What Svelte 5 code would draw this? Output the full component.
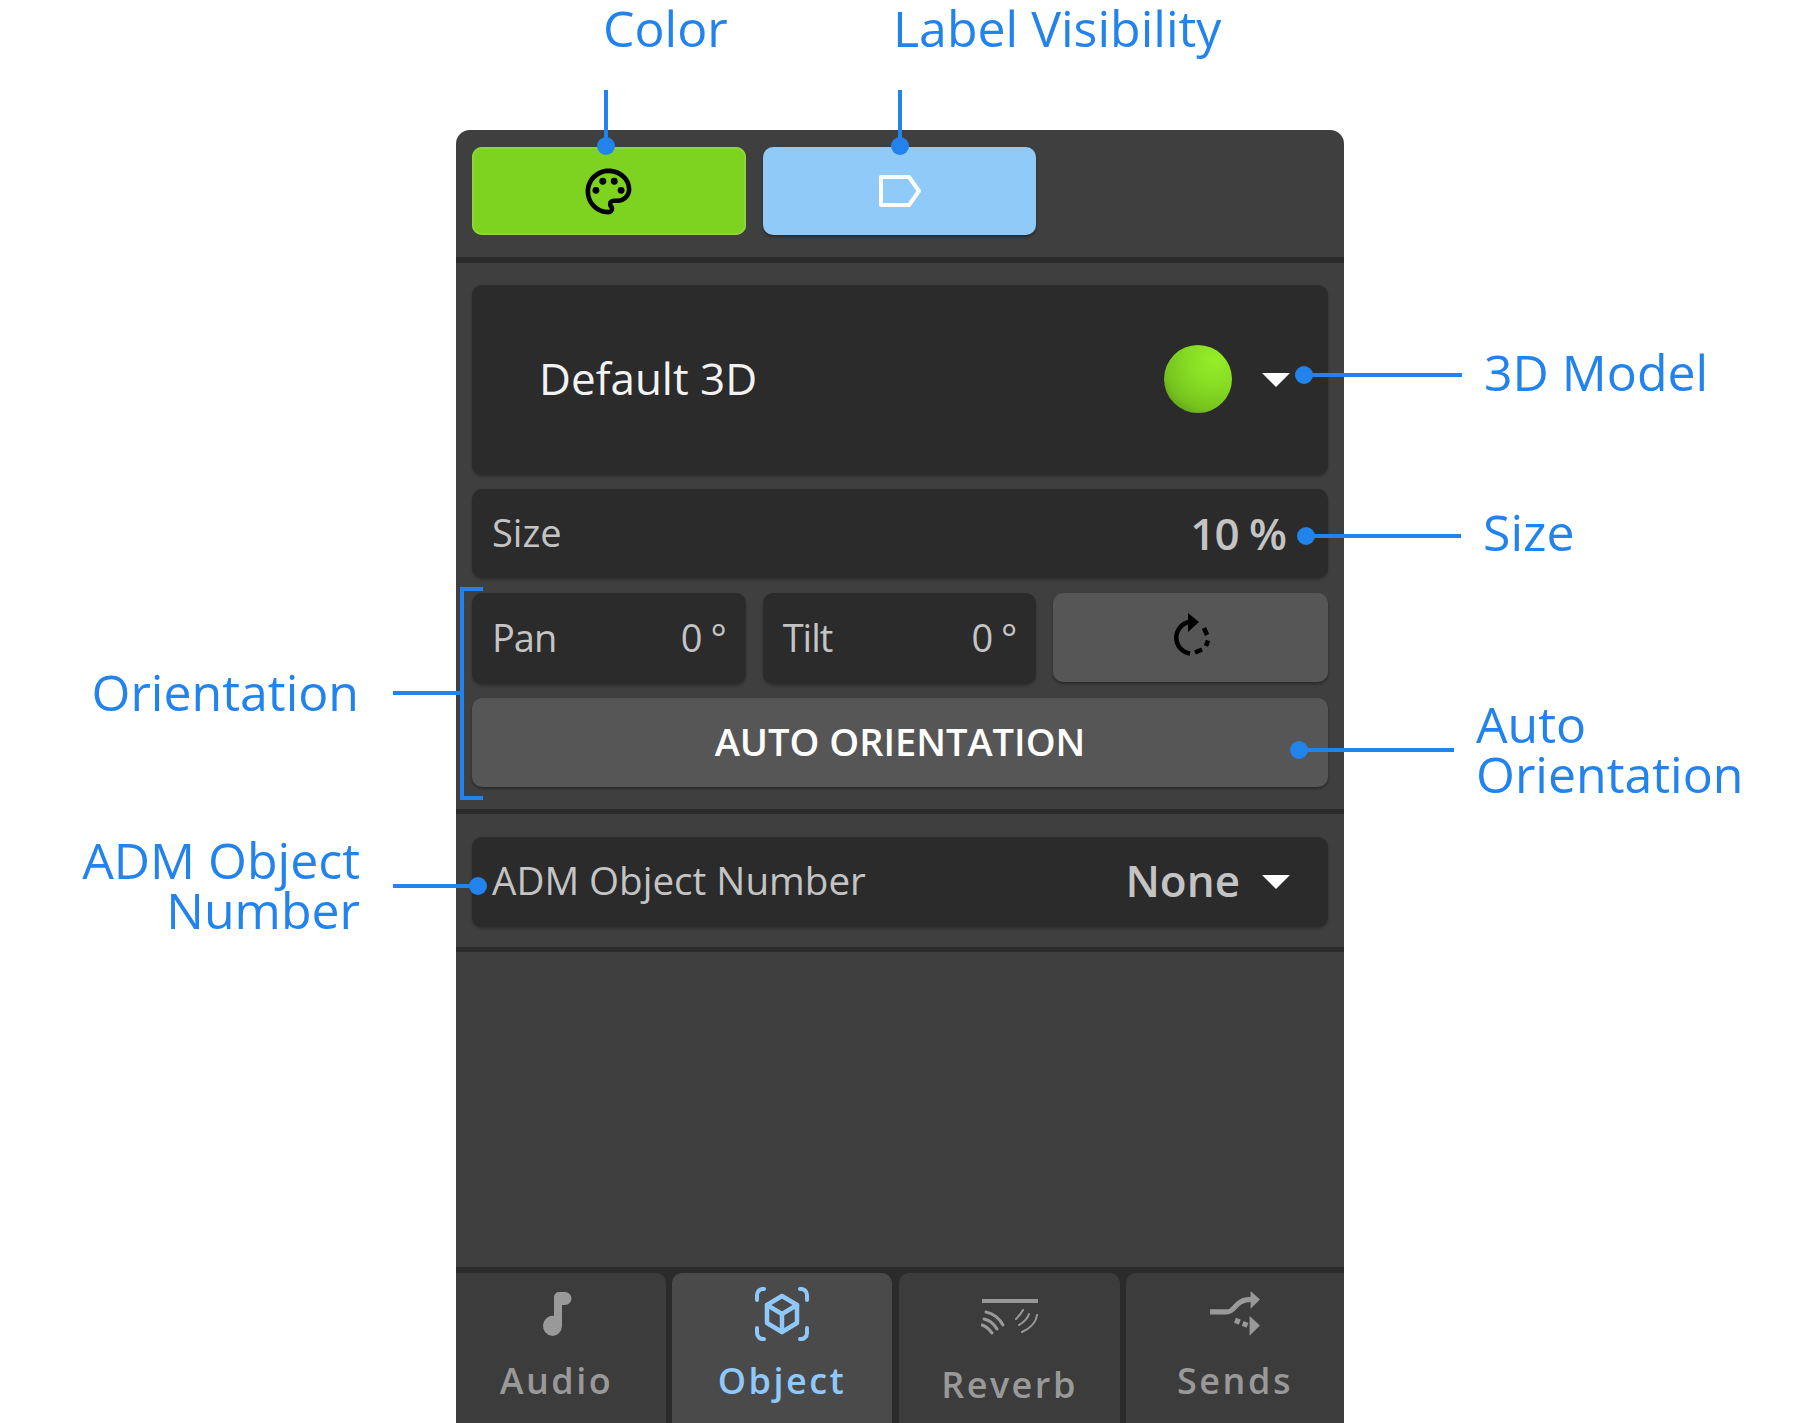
<script>
  const tabs = [
    { id: 'audio', label: 'Audio' },
    { id: 'object', label: 'Object' },
    { id: 'reverb', label: 'Reverb' },
    { id: 'sends', label: 'Sends' }
  ];
</script>

<div class="page">
  <div class="panel">
    <section class="top">
      <button class="btn green" aria-label="Color">
        <svg width="55" height="55" viewBox="0 0 24 24" fill="#000">
          <path d="M12 22C6.49 22 2 17.51 2 12S6.49 2 12 2s10 4.04 10 9c0 3.31-2.69 6-6 6h-1.77c-.28 0-.5.22-.5.5 0 .12.05.23.13.33.41.47.64 1.06.64 1.67A2.5 2.5 0 0 1 12 22zm0-18c-4.41 0-8 3.59-8 8s3.59 8 8 8c.28 0 .5-.22.5-.5a.54.54 0 0 0-.14-.35c-.41-.46-.63-1.05-.63-1.65a2.5 2.5 0 0 1 2.5-2.5H16c2.21 0 4-1.79 4-4 0-3.86-3.59-7-8-7z"/>
          <circle cx="6.5" cy="11.5" r="1.5"/><circle cx="9.5" cy="7.5" r="1.5"/><circle cx="14.5" cy="7.5" r="1.5"/><circle cx="17.5" cy="11.5" r="1.5"/>
        </svg>
      </button>
      <button class="btn blue" aria-label="Label Visibility">
        <svg width="44" height="34" viewBox="0 0 44 34" fill="none" stroke="#fff" stroke-width="4" stroke-linejoin="round">
          <path d="M3 3H31L41 17L31 31H3Z"/>
        </svg>
      </button>
    </section>

    <section class="middle">
      <div class="field model">
        <span class="model-name">Default 3D</span>
        <span class="ball"></span>
        <span class="caret white"></span>
      </div>
      <div class="field size">
        <span class="name">Size</span>
        <span class="value">10 %</span>
      </div>
      <div class="three">
        <div class="field small"><span class="name">Pan</span><span class="value">0 °</span></div>
        <div class="field small"><span class="name">Tilt</span><span class="value">0 °</span></div>
        <button class="btn grey" aria-label="Reset">
          <svg class="reset" width="40" height="44" viewBox="0 0 40 44" fill="none" stroke="#000" stroke-width="4.5">
            <path d="M18 9A16 16 0 0 0 19 40.5"/>
            <path d="M24 39.5L31 36.5M35 33L37 27.5M36 22L33 15"/>
            <path d="M17 0L28 9L17 19Z" fill="#000" stroke="none"/>
          </svg>
        </button>
      </div>
      <button class="btn grey auto"><span>AUTO ORIENTATION</span></button>
    </section>

    <section class="adm">
      <div class="field adm-field">
        <span class="name">ADM Object Number</span>
        <span class="none">None</span>
        <span class="caret"></span>
      </div>
    </section>

    <div class="spacer"></div>

    <nav class="tabs">
      {#each tabs as tab}
        <div class="tab {tab.id}">
          {#if tab.id === 'audio'}
            <svg width="32" height="46" viewBox="0 0 32 46" fill="#999">
              <path d="M13 6A5 5 0 0 1 18 1H24A6.5 6.5 0 0 1 24 14H21V35A9.5 10 0 1 1 13 25Z"/>
            </svg>
          {:else if tab.id === 'object'}
            <svg width="54" height="54" viewBox="0 0 54 54" fill="none" stroke="#8fc8fa" stroke-width="4" stroke-linecap="round" stroke-linejoin="round">
              <path d="M2 13V8A6 6 0 0 1 9 2"/><path d="M45 2A6 6 0 0 1 52 8V13"/>
              <path d="M2 41V46A6 6 0 0 0 9 52"/><path d="M45 52A6 6 0 0 0 52 46V41"/>
              <path d="M27 9L42 18V36L27 45L12 36V18Z" stroke-width="4.5"/>
              <path d="M12 18L27 27L42 18M27 27V45" stroke-width="4.5"/>
            </svg>
          {:else if tab.id === 'reverb'}
            <svg width="58" height="40" viewBox="0 0 58 40" fill="none" stroke="#999" stroke-linecap="round">
              <path d="M1 2H57" stroke-width="4" stroke-linecap="butt"/>
              <path d="M5 13C12 14 19 20 22 26" stroke-width="3"/>
              <path d="M3 20C8 21 13 25 16 30" stroke-width="3"/>
              <path d="M1 26C5 27 8 30 11 34" stroke-width="3"/>
              <path d="M42 11C40 15 38 17 35 20" stroke-width="2"/>
              <path d="M48 15C47 19 43 23 38 26" stroke-width="2"/>
              <path d="M56 16C55 24 48 30 41 33" stroke-width="2"/>
            </svg>
          {:else}
            <svg width="52" height="46" viewBox="0 0 50 44" fill="none" stroke="#999" stroke-width="5">
              <path d="M1 20H17C26 20 24 8 41 8"/>
              <path d="M25 28L37 33" stroke-dasharray="5 3"/>
              <path d="M40 0L49 8L40 17Z" fill="#999" stroke="none"/>
              <path d="M39 24L49 33L39 43Z" fill="#999" stroke="none"/>
            </svg>
          {/if}
          <span class="tab-label">{tab.label}</span>
        </div>
      {/each}
    </nav>
  </div>

  <!-- callouts laid over the panel -->
  <div class="callouts">
    <span class="note n-color">Color</span>
    <span class="note n-label">Label Visibility</span>
    <span class="note n-model">3D Model</span>
    <span class="note n-size">Size</span>
    <span class="note n-orient">Orientation</span>
    <span class="note n-auto">Auto<br />Orientation</span>
    <span class="note n-adm">ADM Object<br />Number</span>

    <i class="vline v-color"></i><i class="dot d-color"></i>
    <i class="vline v-label"></i><i class="dot d-label"></i>
    <i class="hline h-model"></i><i class="dot d-model"></i>
    <i class="hline h-size"></i><i class="dot d-size"></i>
    <i class="hline h-auto"></i><i class="dot d-auto"></i>
    <i class="hline h-orient"></i><i class="bracket"></i>
    <i class="hline h-adm"></i><i class="dot d-adm"></i>
  </div>
</div>

<style>
  :global(body) { margin: 0; background: #fff; }
  .page {
    position: relative;
    width: 1801px;
    height: 1423px;
    padding: 130px 0 0 456px;
    box-sizing: border-box;
    overflow: hidden;
    font-family: "Open Sans", sans-serif;
  }
  .panel {
    width: 888px;
    height: 1293px;
    background: #3f3f3f;
    border-radius: 14px 14px 0 0;
    display: flex;
    flex-direction: column;
  }
  .top {
    display: flex;
    gap: 17px;
    padding: 17px 16px 22px;
    border-bottom: 6px solid #2b2b2b;
  }
  .btn {
    border: 0;
    padding: 0;
    border-radius: 10px;
    display: flex;
    align-items: center;
    justify-content: center;
    box-shadow: 0 2px 3px rgba(0, 0, 0, .35);
  }
  .green { width: 274px; height: 88px; background: #7ed321; box-shadow: inset 0 0 0 2px #8cd63a; }
  .green svg { margin-right: 1px; }
  .blue { width: 273px; height: 88px; background: #90caf9; }
  .middle {
    display: flex;
    flex-direction: column;
    gap: 14px;
    padding: 22px 16px 22px;
    border-bottom: 5px solid #2b2b2b;
  }
  .field {
    background: #2b2b2b;
    border-radius: 10px;
    display: flex;
    align-items: center;
    box-sizing: border-box;
    box-shadow: 0 2px 3px rgba(0, 0, 0, .25);
    color: #c4c4c4;
  }
  .model { height: 190px; padding-left: 67px; }
  .model-name { font-size: 44px; color: #f2f2f2; flex: 1; margin-bottom: 4px; }
  .ball {
    width: 68px;
    height: 68px;
    border-radius: 50%;
    background: radial-gradient(circle at 74% 22%, #96ee28 0%, #86dc23 38%, #76c41f 68%, #4f8415 100%);
    margin: 0 30px 3px 0;
  }
  .caret {
    width: 0;
    height: 0;
    border-left: 14px solid transparent;
    border-right: 14px solid transparent;
    border-top: 14px solid #fff;
    margin-right: 38px;
  }
  .size { height: 89px; padding: 0 42px 0 20px; justify-content: space-between; }
  .name { font-size: 38px; margin-bottom: 4px; }
  .value { font-size: 44px; font-weight: 600; letter-spacing: -1px; margin-bottom: 2px; }
  .three { display: flex; gap: 17px; margin-top: 1px; }
  .small { width: 274px; height: 91px; padding: 0 20px; justify-content: space-between; }
  .small .name { letter-spacing: -1px; }
  .small .value { font-size: 38px; font-weight: 400; letter-spacing: -1px; margin-bottom: 4px; }
  .grey { background: #565656; }
  .three .grey { width: 275px; height: 89px; }
  .reset { margin: 0 0 5px 1px; }
  .auto {
    height: 89px;
    color: #fff;
    font: 600 38px "Open Sans", sans-serif;
  }
  .auto span { margin-bottom: 4px; }
  .adm { padding: 23px 16px 20px; border-bottom: 5px solid #2b2b2b; }
  .adm-field { height: 90px; padding-left: 20px; }
  .adm-field .name { flex: 1; font-size: 38.6px; }
  .none { font-size: 44px; font-weight: 600; margin: 0 22px 4px 0; }
  .spacer { flex: 1; border-bottom: 6px solid #2b2b2b; }
  .tabs { display: flex; gap: 6px; background: #2b2b2b; height: 150px; }
  .tab {
    flex: 1;
    min-width: 0;
    background: #3c3c3c;
    border-radius: 10px 10px 0 0;
    display: flex;
    flex-direction: column;
    align-items: center;
    padding-top: 14px;
    box-sizing: border-box;
  }
  .tab.audio { flex: 0 0 210px; padding-right: 9px; border-top-left-radius: 0; }
  .tab.object { flex: 0 0 220px; }
  .tab.reverb { flex: 0 0 221px; margin-left: 1px; }
  .tab.sends { border-top-right-radius: 0; }
  .tab svg { height: 54px; }
  .tab-label {
    font-size: 36px;
    font-weight: 600;
    letter-spacing: 2.5px;
    color: #999;
    margin-top: 15px;
  }
  .object { background: #4a4a4a; }
  .object .tab-label { color: #8fc8fa; }
  .reverb svg { margin-top: 5px; }
  .reverb .tab-label { margin-top: 14px; }

  .callouts { position: absolute; inset: 0; pointer-events: none; }
  .note {
    position: absolute;
    font-size: 50px;
    line-height: 50px;
    color: #2383ec;
    white-space: nowrap;
  }
  .n-color { left: 603px; top: 3px; }
  .n-label { left: 893px; top: 3px; }
  .n-model { left: 1484px; top: 347px; }
  .n-size { left: 1483px; top: 507px; }
  .n-orient { right: 1442px; top: 667px; }
  .n-auto { left: 1476px; top: 699px; }
  .n-adm { right: 1441px; top: 835px; text-align: right; }

  .vline, .hline, .dot, .bracket { position: absolute; display: block; }
  .vline { width: 4px; top: 90px; height: 56px; background: #2383ec; }
  .v-color { left: 604px; }
  .v-label { left: 898px; }
  .hline { height: 4px; background: #2383ec; }
  .h-model { left: 1304px; width: 158px; top: 373px; }
  .h-size { left: 1306px; width: 155px; top: 534px; }
  .h-auto { left: 1299px; width: 155px; top: 748px; }
  .h-orient { left: 393px; width: 67px; top: 691px; }
  .h-adm { left: 393px; width: 85px; top: 884px; }
  .dot { width: 18px; height: 18px; border-radius: 50%; background: #2383ec; }
  .d-color { left: 597px; top: 137px; }
  .d-label { left: 891px; top: 137px; }
  .d-model { left: 1295px; top: 366px; }
  .d-size { left: 1297px; top: 527px; }
  .d-auto { left: 1290px; top: 741px; }
  .d-adm { left: 469px; top: 877px; }
  .bracket {
    left: 460px;
    top: 587px;
    width: 19px;
    height: 205px;
    border: 4px solid #2383ec;
    border-right: 0;
  }
</style>
